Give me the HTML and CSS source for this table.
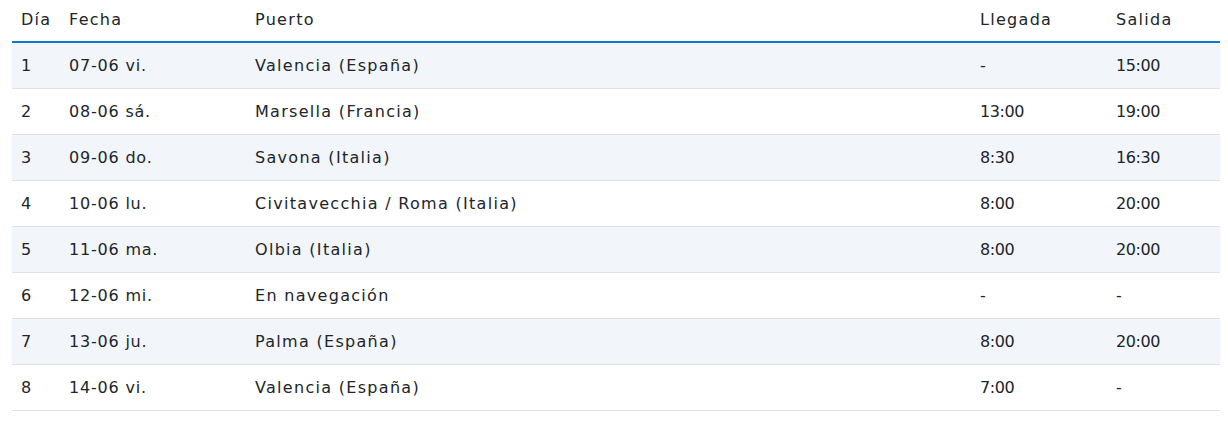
FILE: index.html
```html
<!DOCTYPE html>
<html lang="es">
<head>
<meta charset="utf-8">
<link rel="stylesheet" href="styles.css">
</head>
<body>
<table class="itin">
  <colgroup>
    <col class="c-dia"><col class="c-fecha"><col class="c-puerto"><col class="c-lleg"><col class="c-sal">
  </colgroup>
  <thead>
    <tr><th>Día</th><th>Fecha</th><th>Puerto</th><th>Llegada</th><th>Salida</th></tr>
  </thead>
  <tbody>
    <tr><td>1</td><td class="date">07-06 vi.</td><td>Valencia (España)</td><td class="time">-</td><td class="time">15:00</td></tr>
    <tr><td>2</td><td class="date">08-06 sá.</td><td>Marsella (Francia)</td><td class="time">13:00</td><td class="time">19:00</td></tr>
    <tr><td>3</td><td class="date">09-06 do.</td><td>Savona (Italia)</td><td class="time">8:30</td><td class="time">16:30</td></tr>
    <tr><td>4</td><td class="date">10-06 lu.</td><td>Civitavecchia / Roma (Italia)</td><td class="time">8:00</td><td class="time">20:00</td></tr>
    <tr><td>5</td><td class="date">11-06 ma.</td><td>Olbia (Italia)</td><td class="time">8:00</td><td class="time">20:00</td></tr>
    <tr><td>6</td><td class="date">12-06 mi.</td><td>En navegación</td><td class="time">-</td><td class="time">-</td></tr>
    <tr><td>7</td><td class="date">13-06 ju.</td><td>Palma (España)</td><td class="time">8:00</td><td class="time">20:00</td></tr>
    <tr><td>8</td><td class="date">14-06 vi.</td><td>Valencia (España)</td><td class="time">7:00</td><td class="time">-</td></tr>
  </tbody>
</table>
</body>
</html>
```
FILE: styles.css
```css
html, body { margin: 0; padding: 0; background: #fff; }
body { padding: 0 8px 0 12px; font-family: "DejaVu Sans", "Open Sans", sans-serif; color: #212529; }
.itin { width: 1208px; border-collapse: collapse; table-layout: fixed; font-size: 16px; letter-spacing: 1.3px; }
.c-dia { width: 48px; }
.c-fecha { width: 186px; }
.c-puerto { width: 725px; }
.c-lleg { width: 136px; }
.c-sal { width: 113px; }
.itin th { text-align: left; font-weight: 400; height: 42px; padding: 0 9px 3px; border-bottom: 2px solid #0a7bcc; box-sizing: border-box; vertical-align: middle; }
.itin td { height: 46px; padding: 1px 9px 0; border-bottom: 1px solid #dee2e6; box-sizing: border-box; vertical-align: middle; }
.itin td.date { letter-spacing: 0.8px; }
.itin td.time { letter-spacing: -0.4px; }
.itin tbody tr:nth-child(odd) { background: #f2f6fa; }
```
